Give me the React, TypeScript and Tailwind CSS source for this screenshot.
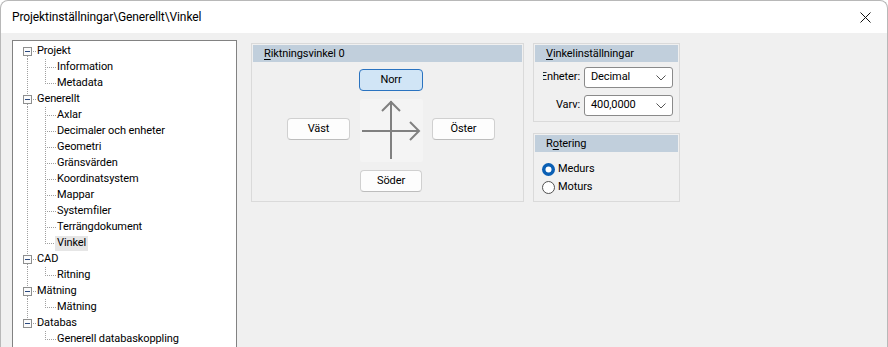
import React from 'react';

const FONT = { fontFamily: '"Segoe UI", Roboto, "Liberation Sans", sans-serif', letterSpacing: '-0.1px' };

const tree = [
  { label: 'Projekt', children: ['Information', 'Metadata'] },
  {
    label: 'Generellt',
    children: [
      'Axlar',
      'Decimaler och enheter',
      'Geometri',
      'Gränsvärden',
      'Koordinatsystem',
      'Mappar',
      'Systemfiler',
      'Terrängdokument',
      'Vinkel',
    ],
  },
  { label: 'CAD', children: ['Ritning'] },
  { label: 'Mätning', children: ['Mätning'] },
  { label: 'Databas', children: ['Generell databaskoppling'] },
];

const DOT = '#a0a0a0';

const ParentLines: React.FC<{ first: boolean; last: boolean }> = ({ first, last }) => (
  <svg width="23" height="16" className="shrink-0">
    {!first && <line x1="14.5" y1="0" x2="14.5" y2="4" stroke={DOT} strokeDasharray="1 1" />}
    {!last && <line x1="14.5" y1="13" x2="14.5" y2="16" stroke={DOT} strokeDasharray="1 1" />}
    <rect x="10.5" y="4.5" width="8" height="8" fill="#fbfbfb" stroke="#8e8f8f" />
    <line x1="12" y1="8.5" x2="17" y2="8.5" stroke="#2c4a80" />
    <line x1="20" y1="8.5" x2="23" y2="8.5" stroke={DOT} strokeDasharray="1 1" />
  </svg>
);

const ChildLines: React.FC<{ parentLast: boolean; last: boolean }> = ({ parentLast, last }) => (
  <svg width="44" height="16" className="shrink-0">
    {!parentLast && <line x1="14.5" y1="0" x2="14.5" y2="16" stroke={DOT} strokeDasharray="1 1" />}
    <line x1="32.5" y1="0" x2="32.5" y2={last ? 9 : 16} stroke={DOT} strokeDasharray="1 1" />
    <line x1="34" y1="8.5" x2="43" y2="8.5" stroke={DOT} strokeDasharray="1 1" />
  </svg>
);

const Header: React.FC<{ children: React.ReactNode }> = ({ children }) => (
  <div className="m-[1px] h-[17px] bg-[#c1cfdc] pl-[11px] flex items-center leading-none">{children}</div>
);

const Btn: React.FC<{ label: string; active?: boolean; className?: string }> = ({ label, active, className }) => (
  <div
    className={
      'h-[22px] flex items-center justify-center rounded-[4px] border ' +
      (active ? 'bg-[#d1e5f6] border-[#2a73c0]' : 'bg-[#fdfdfd] border-[#d0d0d0] border-b-[#bdbdbd]') +
      ' ' +
      (className ?? '')
    }
  >
    {label}
  </div>
);

const Combo: React.FC<{ value: string }> = ({ value }) => (
  <div className="w-[89px] h-[21px] bg-white border border-[#8a8a8a] rounded-[3px] flex items-center pl-[6px] pr-[6px]">
    <span className="flex-1">{value}</span>
    <svg width="10" height="6" viewBox="0 0 10 6">
      <path d="M0.5 0.5 L5 5 L9.5 0.5" fill="none" stroke="#555" strokeWidth="1" />
    </svg>
  </div>
);

const Radio: React.FC<{ label: string; checked?: boolean }> = ({ label, checked }) => (
  <div className="flex items-center h-[18px] gap-[2px]">
    <svg width="15" height="15" viewBox="0 0 15 15">
      {checked ? (
        <>
          <circle cx="7.5" cy="7.5" r="6.5" fill="#0a5fb4" />
          <circle cx="7.5" cy="7.5" r="3" fill="#fff" />
        </>
      ) : (
        <circle cx="7.5" cy="7.5" r="6" fill="#fff" stroke="#505050" strokeWidth="1" />
      )}
    </svg>
    <span>{label}</span>
  </div>
);

const App: React.FC = () => {
  return (
    <div
      className="w-[888px] h-[347px] overflow-hidden bg-white border-x border-t border-[#b8b8b8] rounded-t-[8px] text-[11px] text-black flex flex-col"
      style={FONT}
    >
      <div className="h-[32px] shrink-0 flex items-center pl-[11px] pr-[16px]">
        <span className="flex-1 text-[12px]">Projektinställningar\Generellt\Vinkel</span>
        <svg width="11" height="11" viewBox="0 0 11 11">
          <path d="M0.5 0.5 L10.5 10.5 M10.5 0.5 L0.5 10.5" stroke="#111" strokeWidth="1" />
        </svg>
      </div>
      <div className="flex-1 bg-[#f0f0f0] flex items-start pl-[11px] pt-[7px]">
        <div className="w-[225px] h-[320px] shrink-0 border border-[#828282] bg-white pt-[2px]">
          {tree.map((p, pi) => (
            <div key={p.label}>
              <div className="flex items-center h-[16px]">
                <ParentLines first={pi === 0} last={pi === tree.length - 1} />
                <span className="pl-[1px]">{p.label}</span>
              </div>
              {p.children.map((c, ci) => (
                <div key={c} className="flex items-center h-[16px]">
                  <ChildLines parentLast={pi === tree.length - 1} last={ci === p.children.length - 1} />
                  <span className={'px-[2px] -ml-[2px] h-[15px] flex items-center ' + (c === 'Vinkel' ? 'bg-[#e6e6e6]' : '')}>
                    {c}
                  </span>
                </div>
              ))}
            </div>
          ))}
        </div>

        <div className="ml-[14px] mt-[3px] flex items-start">
          <div className="w-[273px] h-[159px] border border-[#dadada]">
            <Header>
              <span className="underline underline-offset-2">R</span>iktningsvinkel 0
            </Header>
            <div className="pt-[6px]">
              <Btn label="Norr" active className="w-[64px] ml-[107px]" />
              <div className="flex items-start mt-[8px]">
                <Btn label="Väst" className="w-[63px] ml-[35px] mt-[19px] h-[21px]" />
                <div className="w-[63px] h-[63px] ml-[10px] bg-[#f4f4f4] rounded-[2px]">
                  <svg width="63" height="63" viewBox="0 0 63 63">
                    <g stroke="#808080" strokeWidth="2" fill="none">
                      <path d="M31 2 L31 60" />
                      <path d="M2 32 L59 32" />
                      <path d="M22 12 L31 3 L40 12" />
                      <path d="M50 23 L59 32 L50 41" />
                    </g>
                  </svg>
                </div>
                <Btn label="Öster" className="w-[63px] ml-[9px] mt-[19px] h-[21px]" />
              </div>
              <Btn label="Söder" className="w-[62px] ml-[108px] mt-[8px]" />
            </div>
          </div>

          <div className="ml-[9px] flex flex-col gap-[11px]">
            <div className="w-[147px] h-[79px] border border-[#dadada] overflow-hidden">
              <Header>
                <span className="underline underline-offset-2">V</span>inkelinställningar
              </Header>
              <div className="flex flex-col gap-[7px] mt-[5px]">
                <div className="flex items-center">
                  <div className="ml-[9px] w-[37px] overflow-hidden flex justify-end whitespace-nowrap">
                    <span className="shrink-0">Enheter:</span>
                  </div>
                  <div className="ml-[4px]">
                    <Combo value="Decimal" />
                  </div>
                </div>
                <div className="flex items-center">
                  <div className="ml-[9px] w-[37px] flex justify-end">
                    <span>Varv:</span>
                  </div>
                  <div className="ml-[4px]">
                    <Combo value="400,0000" />
                  </div>
                </div>
              </div>
            </div>
            <div className="w-[147px] h-[69px] border border-[#dadada]">
              <Header>
                R<span className="underline underline-offset-2">o</span>tering
              </Header>
              <div className="pl-[7px] pt-[7px]">
                <Radio label="Medurs" checked />
                <Radio label="Moturs" />
              </div>
            </div>
          </div>
        </div>
      </div>
    </div>
  );
};

export default App;
